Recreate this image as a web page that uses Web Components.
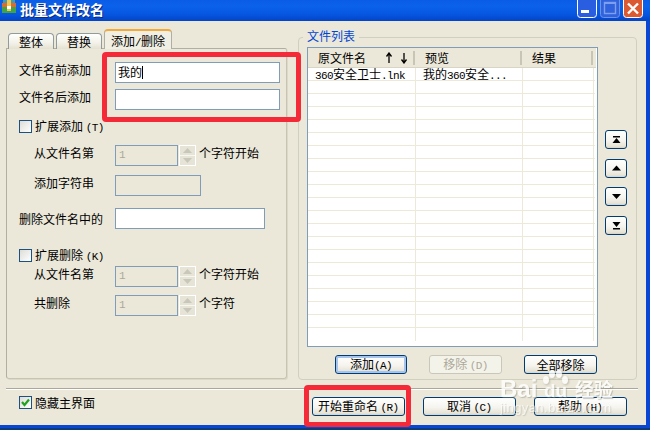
<!DOCTYPE html>
<html lang="zh">
<head>
<meta charset="utf-8">
<title>批量文件改名</title>
<style>
  html, body { margin: 0; padding: 0; background: #0d3a78; overflow: hidden; }
  body { width: 650px; height: 430px; font: 12px/14px "Noto Sans CJK SC", sans-serif; color: #000; }
  i { font: 11px/14px "Liberation Mono", monospace; letter-spacing: -.6px; }
</style>
</head>
<body>

<xp-window caption="批量文件改名">
  <div slot="left">
    <xp-tabs>
      <xp-tab slot="tabs">整体</xp-tab>
      <xp-tab slot="tabs">替换</xp-tab>
      <xp-tab slot="tabs" active>添加<i>/</i>删除</xp-tab>

      <xp-row label="文件名前添加"><xp-input w="165" value="我的" caret></xp-input></xp-row>
      <xp-row label="文件名后添加" style="margin-top:6px"><xp-input w="165"></xp-input></xp-row>
      <xp-check style="margin-top:10px">扩展添加 <i>(T)</i></xp-check>
      <xp-row label="从文件名第" indent style="margin-top:12px"><xp-spin></xp-spin><span>个字符开始</span></xp-row>
      <xp-row label="添加字符串" indent style="margin-top:9px"><xp-input w="86" disabled></xp-input></xp-row>
      <xp-row label="删除文件名中的" center style="margin-top:12px"><xp-input w="150"></xp-input></xp-row>
      <xp-check style="margin-top:20px">扩展删除 <i>(K)</i></xp-check>
      <xp-row label="从文件名第" indent style="margin-top:4px"><xp-spin></xp-spin><span>个字符开始</span></xp-row>
      <xp-row label="共删除" indent style="margin-top:8px"><xp-spin></xp-spin><span>个字符</span></xp-row>
    </xp-tabs>
  </div>

  <xp-group slot="right" legend="文件列表">
    <file-list></file-list>
    <xp-button slot="side" w="22" kind="top"></xp-button>
    <xp-button slot="side" w="22" kind="up"></xp-button>
    <xp-button slot="side" w="22" kind="down"></xp-button>
    <xp-button slot="side" w="22" kind="bottom"></xp-button>
    <xp-button slot="actions" w="72" focused>添加<i>(A)</i></xp-button>
    <xp-button slot="actions" w="73" disabled>移除 <i>(D)</i></xp-button>
    <xp-button slot="actions" w="73">全部移除</xp-button>
  </xp-group>

  <xp-check slot="footer" checked>隐藏主界面</xp-check>
  <xp-button slot="buttons" w="93.5">开始重命名 <i>(R)</i></xp-button>
  <xp-button slot="buttons" w="93.5">取消 <i>(C)</i></xp-button>
  <xp-button slot="buttons" w="93.5">帮助 <i>(H)</i></xp-button>
</xp-window>

<script>
(() => {
  const sh = (el, html) => { el.attachShadow({ mode: "open" }).innerHTML = html; return el.shadowRoot; };

  class XpWindow extends HTMLElement {
    connectedCallback() {
      const cap = this.getAttribute("caption") || "";
      sh(this, `<style>
        :host { display: block; width: 650px; height: 428px; background: #0a46d4; }
        .title { height: 21px; display: flex; align-items: flex-start; color: #fff;
          background: linear-gradient(#0a5ce6 0, #0b62ea 30%, #0655e0 70%, #0444c4 100%); }
        .ico { margin: 0 4px 0 2px; flex: none; }
        .cap { font: bold 14px/19px "Noto Sans CJK SC", sans-serif; text-shadow: 1px 1px 0 #0a2a80; }
        .ctl { margin-left: auto; margin-right: 7px; display: flex; gap: 3px; }
        .ctl svg { display: block; }
        .client { width: 646px; height: 404px; background: #ebe8d9; box-sizing: border-box; }
        .main { display: flex; gap: 11px; padding: 8px 0 0 6px; height: 351px; box-sizing: content-box; }
        .sep { margin: 8px 8px 0 6px; border-top: 1px solid #aca899; border-bottom: 1px solid #fff; }
        .foot { display: flex; align-items: flex-start; padding: 6px 19px 0 19px; }
        .btns { margin-left: auto; display: flex; gap: 17.5px; padding-top: 1px; }
      </style>
      <div class="title">
        <svg class="ico" width="14" height="14" viewBox="0 0 14 14">
          <rect x="1" y="0" width="12" height="4" fill="#3d9bb5"/>
          <rect x="0" y="3" width="14" height="4" fill="#e06a2c"/>
          <rect x="0" y="7" width="14" height="6" fill="#3fa34a"/>
          <rect x="5" y="0" width="4" height="11" fill="#f0c850"/>
          <rect x="5" y="6" width="4" height="3" fill="#fff"/>
        </svg>
        <span class="cap">${cap}</span>
        <div class="ctl">
          <svg width="20" height="18" viewBox="0 0 20 18"><rect x=".5" y="-3" width="19" height="20.5" rx="3" fill="#2a5ee0" stroke="#fff"/><rect x="4" y="10" width="8" height="3" fill="#fff"/></svg>
          <svg width="20" height="18" viewBox="0 0 20 18"><rect x=".5" y="-3" width="19" height="20.5" rx="3" fill="#2f62dc" stroke="#6c92ea"/><rect x="4.500" y="2.500" width="11" height="11" fill="none" stroke="#7e9eee" stroke-width="1.400"/><rect x="4" y="2" width="12" height="2" fill="#7e9eee"/></svg>
          <svg width="20" height="18" viewBox="0 0 20 18"><rect x=".5" y="-3" width="19" height="20.5" rx="3" fill="#dc5a32" stroke="#fff"/><path d="M5 3.500l10 10M15 3.500L5 13.500" stroke="#fff" stroke-width="2.400"/></svg>
        </div>
      </div>
      <div class="client">
        <div class="main"><slot name="left"></slot><slot name="right"></slot></div>
        <div class="sep"></div>
        <div class="foot"><slot name="footer"></slot><div class="btns"><slot name="buttons"></slot></div></div>
      </div>`);
    }
  }

  class XpTabs extends HTMLElement {
    connectedCallback() {
      sh(this, `<style>
        :host { display: block; width: 281px; }
        .strip { display: flex; align-items: flex-end; height: 20px; padding-left: 2px; gap: 2px; }
        .panel { box-sizing: border-box; height: 331px; margin-top: -1px; padding: 13px 0 0 12px;
          border: 1px solid #aeb0a4; border-right-color: #c6c4b2; border-bottom-color: #c6c4b2; border-radius: 0 2px 3px 3px;
          box-shadow: 1px 1px 0 #dcd9c8; }
      </style>
      <div class="strip"><slot name="tabs"></slot></div>
      <div class="panel"><slot></slot></div>`);
    }
  }

  class XpTab extends HTMLElement {
    connectedCallback() {
      const on = this.hasAttribute("active");
      sh(this, `<style>
        :host { display: block; position: relative; z-index: ${on ? 1 : 0}; }
        div { box-sizing: border-box; border: 1px solid #919b9c; border-bottom: 0; border-radius: 4px 4px 0 0;
          text-align: center; }
        .off { width: 46px; height: 16px; line-height: 16px; background: linear-gradient(#fff, #f3f1e8 60%, #e4e1d0); }
        .on { width: 68px; height: 20px; line-height: 19px; background: #f1efe3; border-top: 2px solid #f2a93a; border-color: #f2a93a #aeb0a4 transparent; }
      </style><div class="${on ? "on" : "off"}"><slot></slot></div>`);
    }
  }

  class XpRow extends HTMLElement {
    connectedCallback() {
      const ind = this.hasAttribute("indent");
      const lift = this.hasAttribute("center") ? 0 : -5;
      sh(this, `<style>
        :host { display: flex; align-items: center; height: 21px; }
        .lab { box-sizing: border-box; width: 96px; flex: none; padding-left: ${ind ? 15 : 0}px; margin-top: ${lift}px; }
        ::slotted(span) { margin-left: 3px; margin-top: -5px; }
      </style><span class="lab">${this.getAttribute("label") || ""}</span><slot></slot>`);
    }
  }

  class XpInput extends HTMLElement {
    connectedCallback() {
      const dis = this.hasAttribute("disabled");
      const w = this.getAttribute("w") || 100;
      const caret = this.hasAttribute("caret") ? '<span class="caret"></span>' : "";
      sh(this, `<style>
        :host { display: block; box-sizing: border-box; width: ${w}px; height: 21px; flex: none;
          border: 1px solid #7f9db9; background: ${dis ? "#ebe8d9" : "#fff"}; padding-left: 2px;
          line-height: 17px; color: ${dis ? "#aca899" : "#000"}; }
        .caret { display: inline-block; width: 1px; height: 13px; background: #000; vertical-align: -2px; }
      </style>${this.getAttribute("value") || ""}${caret}`);
    }
  }

  class XpSpin extends HTMLElement {
    connectedCallback() {
      sh(this, `<style>
        :host { display: flex; flex: none; height: 21px; }
        .box { box-sizing: border-box; width: 63px; border: 1px solid #7f9db9; color: #aca899; padding-left: 3px;
          font: 11px/19px "Liberation Mono", monospace; }
        .arrows { box-sizing: border-box; width: 17px; margin-left: 1px; border: 1px solid #fff; display: flex; flex-direction: column; }
        .arrows div { flex: 1; background: #e6e4d6; display: flex; align-items: center; justify-content: center; }
        .arrows div + div { border-top: 1px solid #f7f6ef; }
      </style>
      <div class="box">1</div>
      <div class="arrows">
        <div><svg width="9" height="5"><path d="M4.500 0L9 5H0z" fill="#c9c7ba"/></svg></div>
        <div><svg width="9" height="5"><path d="M0 0h9L4.500 5z" fill="#c9c7ba"/></svg></div>
      </div>`);
    }
  }

  class XpCheck extends HTMLElement {
    connectedCallback() {
      const tick = this.hasAttribute("checked")
        ? '<svg width="11" height="11" viewBox="0 0 11 11"><path d="M2 5l2.500 3L9 2.500" fill="none" stroke="#21a121" stroke-width="2.200"/></svg>' : "";
      sh(this, `<style>
        :host { display: flex; align-items: center; height: 13px; }
        .box { box-sizing: border-box; width: 13px; height: 13px; flex: none; margin-right: 3px; border: 1px solid #1c5180;
          background: linear-gradient(135deg, #dcdcd7, #fff); display: flex; align-items: center; justify-content: center; }
        .t { white-space: nowrap; }
      </style><span class="box">${tick}</span><span class="t"><slot></slot></span>`);
    }
  }

  const GLYPHS = {
    top: '<path d="M2 1h7v1.400H2zM5.500 3L9.500 8h-8z"/>',
    up: '<path d="M5.500 1.500L10 6.500H1z"/>',
    down: '<path d="M1 2h9L5.500 7z"/>',
    bottom: '<path d="M1.500 1h8L5.500 6zM2 7h7v1.400H2z"/>',
  };

  class XpButton extends HTMLElement {
    connectedCallback() {
      const dis = this.hasAttribute("disabled");
      const foc = this.hasAttribute("focused");
      const w = this.getAttribute("w") || 75;
      const kind = this.getAttribute("kind");
      const glyph = kind ? `<svg width="11" height="9" viewBox="0 0 11 9" fill="#000">${GLYPHS[kind]}</svg>` : "";
      sh(this, `<style>
        :host { display: flex; align-items: center; justify-content: center; box-sizing: border-box; flex: none;
          width: ${w}px; height: 19px; border-radius: 3px;
          border: 1px solid ${dis ? "#c9c7ba" : "#003c74"}; color: ${dis ? "#aca899" : "#000"};
          background: ${dis ? "#f4f3ea" : "linear-gradient(#fff, #f5f4ee 55%, #e6e3d6 90%, #d6d0c5)"};
          ${foc ? "box-shadow: inset 0 0 0 2px #a6c5ee;" : ""} }
        .t { white-space: nowrap; }
      </style>${glyph}<span class="t"><slot></slot></span>`);
    }
  }

  class XpGroup extends HTMLElement {
    connectedCallback() {
      sh(this, `<style>
        :host { display: block; box-sizing: border-box; position: relative; width: 339px; height: 343px; margin-top: 8px;
          border: 1px solid #d0d0bf; border-radius: 4px; padding: 9px 0 0 8px; }
        .lg { position: absolute; left: 4px; top: -9px; padding: 0 4px; background: #ebe8d9; color: #0046d5; }
        .wrap { display: flex; gap: 7px; }
        .side { display: flex; flex-direction: column; gap: 9.67px; padding-top: 83px; }
        .acts { display: flex; gap: 22px; padding: 8px 0 0 28px; }
      </style>
      <span class="lg">${this.getAttribute("legend") || ""}</span>
      <div class="wrap"><slot></slot><div class="side"><slot name="side"></slot></div></div>
      <div class="acts"><slot name="actions"></slot></div>`);
    }
  }

  class FileList extends HTMLElement {
    connectedCallback() {
      let rows = "";
      for (let i = 0; i < 21; i++) {
        rows += i === 0
          ? '<div class="r"><span><i>360</i>安全卫士<i>.lnk</i></span><span>我的<i>360</i>安全<i>...</i></span><span></span></div>'
          : '<div class="r"><span></span><span></span><span></span></div>';
      }
      sh(this, `<style>
        :host { display: block; box-sizing: border-box; width: 291px; height: 300px; border: 1px solid #7f9db9; background: #fff; overflow: hidden; }
        i { font: 11px/12px "Liberation Mono", monospace; letter-spacing: -.6px; }
        .h { display: grid; grid-template-columns: 107px 107px 71px; height: 20px; background: #ebe8d9; border-bottom: 1px solid #d8d5c4; box-sizing: border-box; width: 288px; }
        .h span { display: flex; align-items: center; box-sizing: border-box; padding-left: 10px; margin: 3px 0 2px; border-right: 2px solid #c8c5b4; }
        .h svg { flex: none; }
        .r { display: grid; grid-template-columns: 108px 107px 71px; height: 13px; box-sizing: border-box; border-bottom: 1px solid #ece9d8; width: 287px; line-height: 12px; }
        .r span { box-sizing: border-box; padding-left: 7px; border-right: 1px solid #ece9d8; white-space: nowrap; }
        .r:last-child { border-bottom: 0; }
      </style>
      <div class="h">
        <span>原文件名
          <svg style="margin-left:19px" width="8" height="12" viewBox="0 0 8 12"><path d="M4 11V2M1.500 4.500L4 1l2.500 3.500" fill="none" stroke="#000" stroke-width="1.300"/></svg>
          <svg style="margin-left:7px" width="8" height="12" viewBox="0 0 8 12"><path d="M4 1v9M1.500 7.500L4 11l2.500-3.500" fill="none" stroke="#000" stroke-width="1.300"/></svg>
        </span>
        <span>预览</span><span>结果</span>
      </div>${rows}`);
    }
  }

  class RedBox extends HTMLElement {
    connectedCallback() {
      sh(this, `<style>:host { display: block; position: absolute; box-sizing: border-box; border: 5px solid #f42a38; border-radius: 4px; pointer-events: none; }</style>`);
    }
  }

  class BaiduMark extends HTMLElement {
    connectedCallback() {
      sh(this, `<style>
        :host { display: block; position: absolute; left: 499px; top: 370px; width: 120px; height: 44px; color: #fff; opacity: .8; pointer-events: none; }
        span { position: absolute; white-space: nowrap; text-shadow: 1px 1px 1px rgba(140,140,125,.6); }
        .b { left: 1px; top: 5px; font: bold 24px/28px "Liberation Sans", sans-serif; }
        .d { left: 45px; top: 10px; font: bold 19px/22px "Liberation Sans", sans-serif; }
        .c { left: 76px; top: 7px; font: bold 19px/24px "Noto Sans CJK SC", sans-serif; }
        .u { left: 1px; top: 31px; font: 13px/14px "Liberation Sans", sans-serif; letter-spacing: .4px; opacity: .7; }
        svg { position: absolute; left: 41px; top: 0; filter: drop-shadow(1px 1px 1px rgba(140,140,125,.6)); }
      </style>
      <svg width="30" height="16" viewBox="0 0 30 16" fill="#fff"><ellipse cx="6" cy="10" rx="3" ry="4"/><ellipse cx="12" cy="4" rx="3" ry="4"/><ellipse cx="19" cy="4" rx="3" ry="4"/><ellipse cx="25" cy="10" rx="3" ry="4"/></svg>
      <span class="b">Bai</span><span class="d">du</span><span class="c">经验</span>
      <span class="u">jingyan.baidu.com</span>`);
    }
  }

  customElements.define("xp-window", XpWindow);
  customElements.define("xp-tabs", XpTabs);
  customElements.define("xp-tab", XpTab);
  customElements.define("xp-row", XpRow);
  customElements.define("xp-input", XpInput);
  customElements.define("xp-spin", XpSpin);
  customElements.define("xp-check", XpCheck);
  customElements.define("xp-button", XpButton);
  customElements.define("xp-group", XpGroup);
  customElements.define("file-list", FileList);
  customElements.define("red-box", RedBox);
  customElements.define("baidu-mark", BaiduMark);

  // annotations sit over the dialog, on top of everything else
  const add = (tag, css) => { const e = document.createElement(tag); e.style.cssText = css; document.body.appendChild(e); };
  add("red-box", "left:102px;top:52px;width:199px;height:70px");
  add("red-box", "left:304px;top:385px;width:107px;height:42px");
  add("baidu-mark", "");
})();
</script>
</body>
</html>
